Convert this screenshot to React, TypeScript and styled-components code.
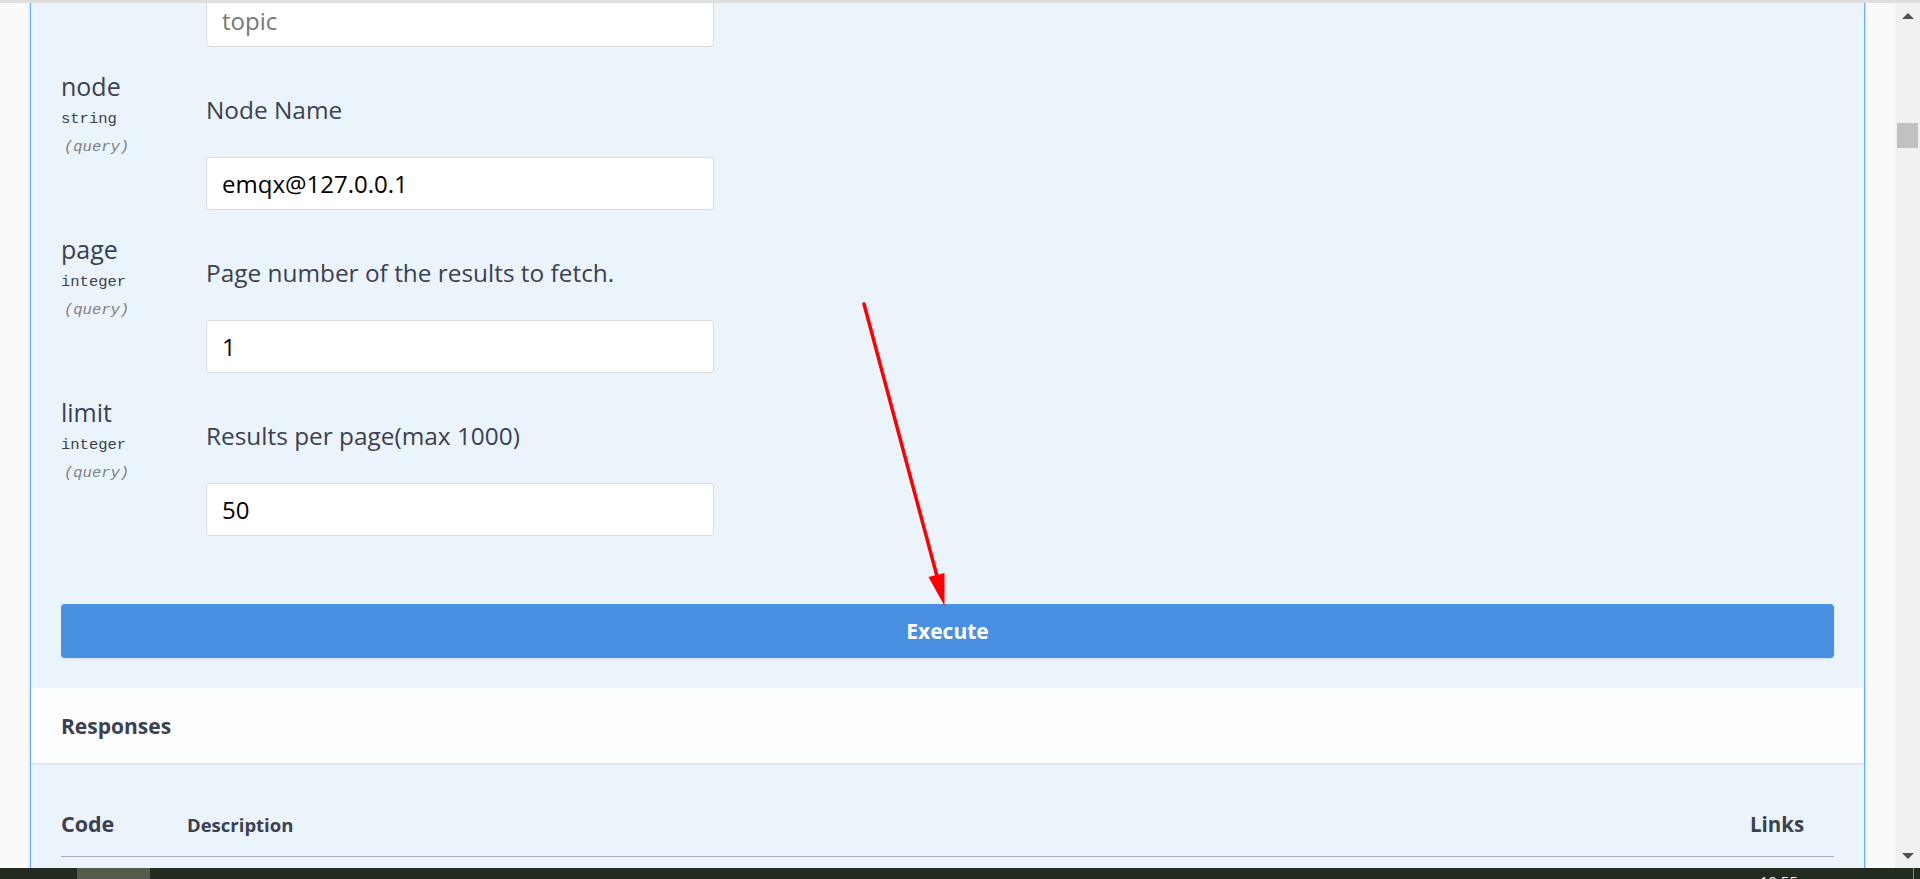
import React from "react";
import styled, { createGlobalStyle } from "styled-components";

const GlobalStyle = createGlobalStyle`
  html, body { margin: 0; padding: 0; height: 100%; overflow: hidden; background: #fafafa; }
  #root { height: 100%; }
  *, *::before, *::after { box-sizing: border-box; }
`;

const Screen = styled.div`
  position: relative;
  width: 1920px;
  height: 879px;
  display: flex;
  flex-direction: column;
  overflow: hidden;
  font-family: "Open Sans", "Noto Sans", sans-serif;
  color: #3b4151;
`;

const TopRule = styled.div`
  flex: none;
  height: 3px;
  background: #dedede;
`;

const Body = styled.div`
  flex: none;
  height: 865px;
  display: flex;
  overflow: hidden;
`;

const Page = styled.div`
  flex: 1;
  padding: 0 30px;
  overflow: hidden;
  background: #fafafa;
`;

const Opblock = styled.section`
  margin-top: -9px;
  padding-bottom: 300px;
  background: #ebf3fb;
  border-left: 1px solid #61affe;
  border-right: 1px solid #61affe;
  box-shadow: 0 0 3px rgba(0, 0, 0, 0.19);
`;

const Params = styled.div`
  padding: 0 30px;
`;

const ParamRow = styled.div<{ $first?: boolean }>`
  display: grid;
  grid-template-columns: 145px 1fr;
  padding-top: ${(p) => (p.$first ? "0" : "25px")};
`;

const NameCell = styled.div`
  display: flex;
  flex-direction: column;
`;

const ParamName = styled.div`
  font-size: 25px;
  line-height: 30px;
  margin-top: -1px;
`;

const ParamType = styled.div<{ $in?: boolean }>`
  margin-top: 8px;
  font-family: "Liberation Mono", "DejaVu Sans Mono", monospace;
  font-size: 15.5px;
  line-height: 20px;
  font-style: ${(p) => (p.$in ? "italic" : "normal")};
  color: ${(p) => (p.$in ? "#808080" : "#3b4151")};
  padding-left: ${(p) => (p.$in ? "3px" : "0")};
`;

const DescCell = styled.div`
  display: flex;
  flex-direction: column;
`;

const Description = styled.div`
  margin-top: 23px;
  margin-bottom: 32px;
  font-size: 24.4px;
  line-height: 30px;
`;

const TextInput = styled.input`
  width: 508px;
  height: 53px;
  padding: 0 15px;
  border: 1px solid #d9d9d9;
  border-radius: 4px;
  background: #fff;
  font-family: "Open Sans", "Noto Sans", sans-serif;
  font-size: 24px;
  color: #000;
  outline: none;
  &::placeholder {
    color: #787878;
  }
`;

const ExecuteWrapper = styled.div`
  padding: 68px 30px 30px;
`;

const ExecuteButton = styled.button`
  display: block;
  width: 100%;
  height: 54px;
  border: none;
  border-radius: 4px;
  background: #4990e2;
  color: #fff;
  font-family: "Open Sans", "Noto Sans", sans-serif;
  font-size: 21px;
  font-weight: 700;
  box-shadow: 0 1px 2px rgba(0, 0, 0, 0.1);
`;

const ResponsesHeader = styled.div`
  height: 75px;
  padding: 0 30px;
  display: flex;
  align-items: center;
  background: #fbfdfe;
  box-shadow: 0 1px 2px rgba(0, 0, 0, 0.1);
`;

const SectionTitle = styled.h4`
  margin: 0;
  font-size: 21px;
  font-weight: 700;
`;

const ResponsesTable = styled.div`
  padding: 0 30px;
`;

const HeaderRow = styled.div`
  display: grid;
  grid-template-columns: 126px 1fr 84px;
  align-items: baseline;
  padding: 47px 0 17px;
  border-bottom: 1px solid #a8aebb;
`;

const HeadCell = styled.div<{ $size: number }>`
  font-size: ${(p) => p.$size}px;
  font-weight: 700;
  line-height: 28px;
`;

const Scrollbar = styled.div`
  flex: none;
  width: 25px;
  display: flex;
  flex-direction: column;
  background: #f1f1f1;
`;

const ScrollButton = styled.div`
  flex: none;
  height: 25px;
  display: flex;
  align-items: center;
  justify-content: center;
`;

const Triangle = styled.span<{ $down?: boolean }>`
  width: 0;
  height: 0;
  border-left: 6px solid transparent;
  border-right: 6px solid transparent;
  ${(p) =>
    p.$down ? "border-top: 6px solid #505050;" : "border-bottom: 6px solid #505050;"}
`;

const ScrollTrack = styled.div`
  flex: 1;
  padding: 95px 2px 0;
`;

const Thumb = styled.div`
  height: 25px;
  background: #c1c1c1;
`;

const Taskbar = styled.div`
  flex: none;
  height: 11px;
  display: flex;
  background: #232a1f;
  overflow: hidden;
`;

const TaskItem = styled.div`
  margin-left: 77px;
  width: 73px;
  background: #545a4c;
`;

const Clock = styled.div`
  margin-left: auto;
  padding-top: 4px;
  font-size: 15px;
  line-height: 18px;
  color: #f0f0f0;
`;

const Separator = styled.div`
  margin: 0 6px 0 115px;
  width: 1px;
  background: #8a8a8a;
`;

const Overlay = styled.svg`
  position: absolute;
  left: 0;
  top: 0;
  pointer-events: none;
`;

type Param = { name: string; type: string; desc: string; value: string };

const params: Param[] = [
  { name: "node", type: "string", desc: "Node Name", value: "emqx@127.0.0.1" },
  { name: "page", type: "integer", desc: "Page number of the results to fetch.", value: "1" },
  { name: "limit", type: "integer", desc: "Results per page(max 1000)", value: "50" },
];

export default function App() {
  return (
    <Screen>
      <GlobalStyle />
      <TopRule />
      <Body>
        <Page>
          <Opblock>
            <Params>
              <ParamRow $first>
                <NameCell />
                <DescCell>
                  <TextInput placeholder="topic" readOnly />
                </DescCell>
              </ParamRow>
              {params.map((p) => (
                <ParamRow key={p.name}>
                  <NameCell>
                    <ParamName>{p.name}</ParamName>
                    <ParamType>{p.type}</ParamType>
                    <ParamType $in>(query)</ParamType>
                  </NameCell>
                  <DescCell>
                    <Description>{p.desc}</Description>
                    <TextInput defaultValue={p.value} readOnly />
                  </DescCell>
                </ParamRow>
              ))}
            </Params>
            <ExecuteWrapper>
              <ExecuteButton>Execute</ExecuteButton>
            </ExecuteWrapper>
            <ResponsesHeader>
              <SectionTitle>Responses</SectionTitle>
            </ResponsesHeader>
            <ResponsesTable>
              <HeaderRow>
                <HeadCell $size={21.5}>Code</HeadCell>
                <HeadCell $size={18.5}>Description</HeadCell>
                <HeadCell $size={20.5}>Links</HeadCell>
              </HeaderRow>
            </ResponsesTable>
          </Opblock>
        </Page>
        <Scrollbar>
          <ScrollButton>
            <Triangle />
          </ScrollButton>
          <ScrollTrack>
            <Thumb />
          </ScrollTrack>
          <ScrollButton>
            <Triangle $down />
          </ScrollButton>
        </Scrollbar>
      </Body>
      <Taskbar>
        <TaskItem />
        <Clock>10:55</Clock>
        <Separator />
      </Taskbar>
      <Overlay width="1920" height="879" viewBox="0 0 1920 879">
        <line x1="864" y1="304" x2="938" y2="580" stroke="#ff0000" strokeWidth="3.5" strokeLinecap="round" />
        <polygon points="944.5,606 928.5,577 944.5,573" fill="#ff0000" />
      </Overlay>
    </Screen>
  );
}
